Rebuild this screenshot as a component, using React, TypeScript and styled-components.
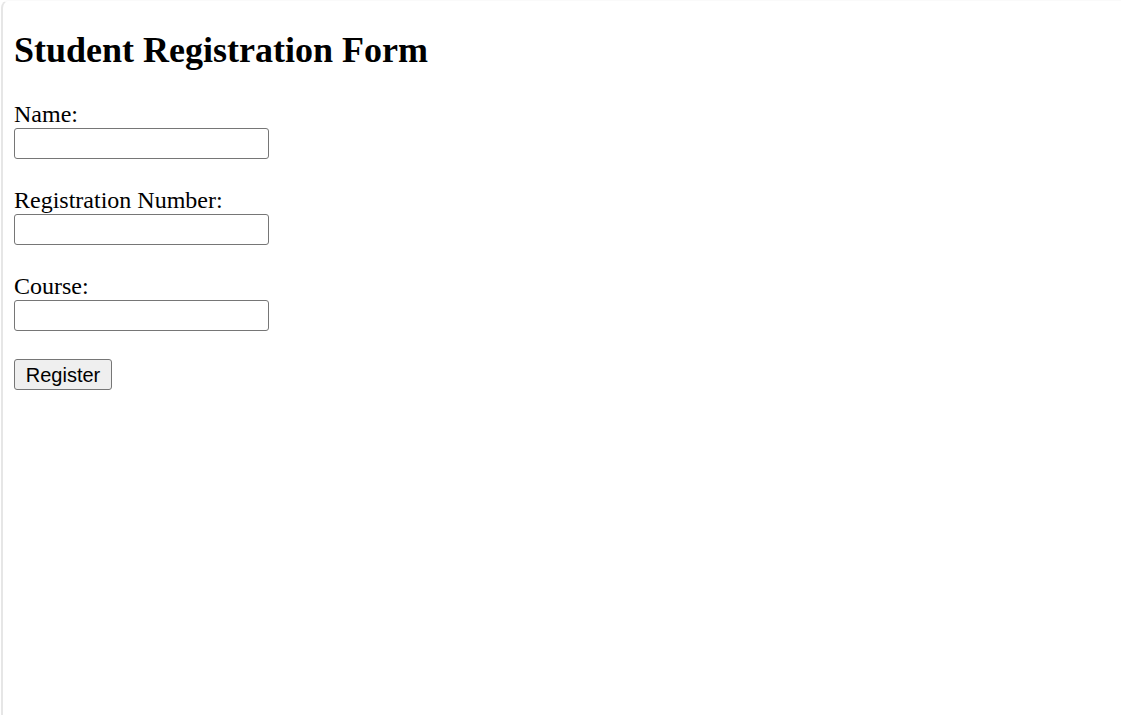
import React, { useState } from "react";
import styled, { createGlobalStyle } from "styled-components";

const GlobalStyle = createGlobalStyle`
  html, body {
    margin: 0;
    padding: 0;
    background: #ffffff;
  }
  body {
    font-family: "Liberation Serif", "Times New Roman", serif;
    color: #000000;
  }
`;

function App() {
  const [name, setName] = useState("");
  const [regNo, setRegNo] = useState("");
  const [course, setCourse] = useState("");

  const fields = [
    { id: "name", label: "Name:", value: name, set: setName },
    { id: "regno", label: "Registration Number:", value: regNo, set: setRegNo },
    { id: "course", label: "Course:", value: course, set: setCourse },
  ];

  return (
    <>
      <GlobalStyle />
      <Frame>
        <Title>Student Registration Form</Title>
        <Form onSubmit={(e) => e.preventDefault()}>
          {fields.map((f) => (
            <Field key={f.id}>
              <Label htmlFor={f.id}>{f.label}</Label>
              <Input
                id={f.id}
                type="text"
                value={f.value}
                onChange={(e) => f.set(e.target.value)}
              />
            </Field>
          ))}
          <Button type="submit">Register</Button>
        </Form>
      </Frame>
    </>
  );
}

const Frame = styled.div`
  box-sizing: border-box;
  min-height: 715px;
  margin-left: 1px;
  border-left: 2px solid #e6e6e6;
  border-top: 1px solid #fafafa;
  border-top-left-radius: 8px;
  padding: 28px 0 0 11px;
`;

const Title = styled.h2`
  margin: 0 0 29px;
  font-family: "Liberation Serif", "Times New Roman", serif;
  font-size: 36px;
  font-weight: bold;
  line-height: normal;
`;

const Form = styled.form`
  display: flex;
  flex-direction: column;
  align-items: flex-start;
`;

const Field = styled.div`
  display: flex;
  flex-direction: column;
  align-items: flex-start;
  margin-bottom: 27px;
`;

const Label = styled.label`
  font-size: 24px;
  line-height: 28px;
`;

const Input = styled.input`
  box-sizing: border-box;
  width: 255px;
  height: 31px;
  margin: 0;
  padding: 1px 3px;
  border: 1.5px solid #767676;
  border-radius: 3px;
  font-family: "Liberation Sans", Arial, sans-serif;
  font-size: 20px;
  background: #ffffff;
`;

const Button = styled.button`
  box-sizing: border-box;
  width: 98px;
  height: 31px;
  margin: 1px 0 0;
  padding: 0;
  border: 1.5px solid #767676;
  border-radius: 3px;
  background: #efefef;
  color: #000000;
  font-family: "Liberation Sans", Arial, sans-serif;
  font-size: 20px;
  line-height: 1;
  cursor: pointer;
`;

export default App;
